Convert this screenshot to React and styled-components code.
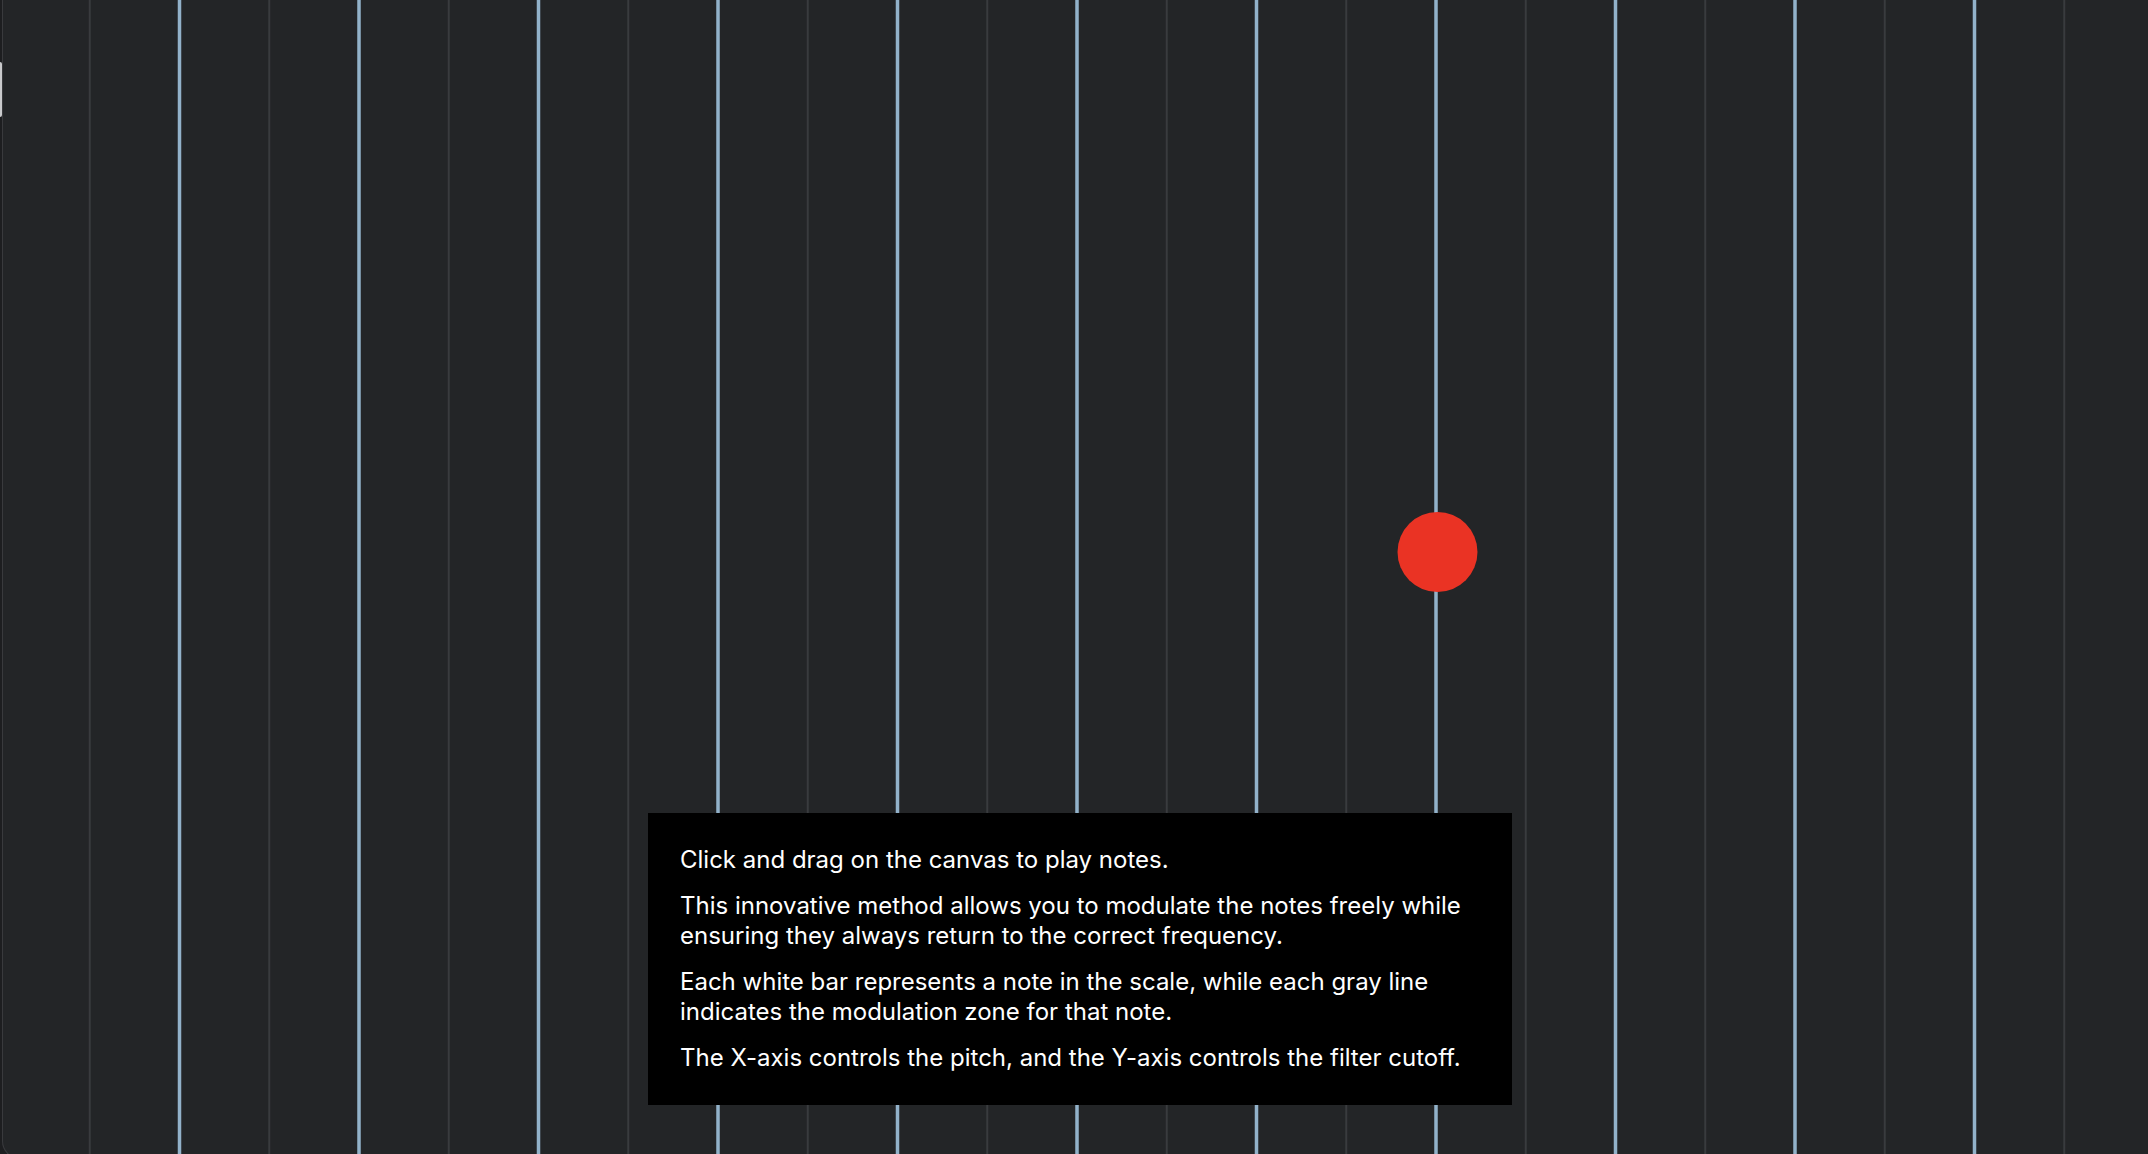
import styled, { createGlobalStyle } from "styled-components";

const GlobalStyle = createGlobalStyle`
  html, body {
    margin: 0;
    padding: 0;
    overflow: hidden;
    background: #1d1e20;
  }
  #root {
    height: 100vh;
  }
`;

const STEP = 179.5;
const OFFSET = 3; // frame content starts 3px in from the page edge
const ZONES = 12;

const Frame = styled.div`
  position: relative;
  margin-left: 2px;
  width: 2154px;
  height: calc(100vh + 4px);
  border-left: 1px solid #393a3d;
  border-bottom: 1px solid #393a3d;
  border-bottom-left-radius: 18px;
  background: #232527;
  overflow: hidden;
`;

const Canvas = styled.svg`
  display: block;
  width: 100%;
  height: 100%;
`;

const Handle = styled.div`
  position: absolute;
  left: 0;
  top: 62px;
  width: 2px;
  height: 55px;
  border-radius: 0 2px 2px 0;
  background: #c9cacc;
`;

const Info = styled.div`
  position: absolute;
  left: 50%;
  bottom: 53px;
  transform: translateX(-50%);
  width: 800px;
  padding: 32px;
  background: #000;
  color: #fff;
  font-family: Inter, "Noto Sans", sans-serif;
  font-size: 24px;
  line-height: 30px;
`;

const Line = styled.p`
  margin: 0 0 16px;

  &:last-child {
    margin-bottom: 0;
  }
`;

const texts = [
  "Click and drag on the canvas to play notes.",
  "This innovative method allows you to modulate the notes freely while ensuring they always return to the correct frequency.",
  "Each white bar represents a note in the scale, while each gray line indicates the modulation zone for that note.",
  "The X-axis controls the pitch, and the Y-axis controls the filter cutoff.",
];

const App = () => {
  const zones = Array.from({ length: ZONES }, (_, i) => i);

  return (
    <>
      <GlobalStyle />
      <Frame>
        <Canvas>
          {zones.map((i) => (
            <rect
              key={"g" + i}
              x={STEP / 2 + STEP * i - OFFSET - 1}
              y={0}
              width={2}
              height="100%"
              fill="#393b3e"
            />
          ))}
          {zones.map((i) => (
            <rect
              key={"b" + i}
              x={STEP * (i + 1) - OFFSET - 1.75}
              y={0}
              width={3.5}
              height="100%"
              fill="#92b2ca"
            />
          ))}
          <circle cx={1437.5 - OFFSET} cy={552} r={40} fill="#ea3324" />
        </Canvas>
        <Info>
          {texts.map((t) => (
            <Line key={t}>{t}</Line>
          ))}
        </Info>
      </Frame>
      <Handle />
    </>
  );
};

export default App;
